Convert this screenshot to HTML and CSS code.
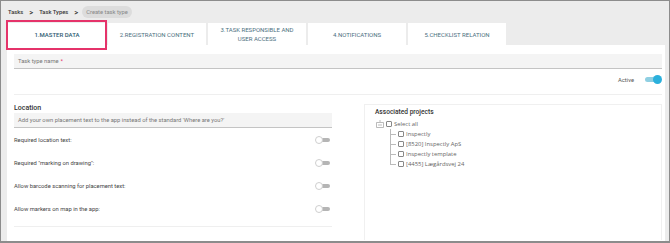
FILE: index.html
```html
<!DOCTYPE html>
<html>
<head>
<meta charset="utf-8">
<link rel="stylesheet" href="styles.css">
</head>
<body>
<div class="frame">
  <div class="crumbs">
    <span class="crumb">Tasks</span>
    <span class="sep">&gt;</span>
    <span class="crumb">Task Types</span>
    <span class="sep">&gt;</span>
    <span class="pill">Create task type</span>
  </div>
  <div class="tabs">
    <div class="tab active">1.MASTER DATA</div>
    <div class="tab">2.REGISTRATION CONTENT</div>
    <div class="tab two">3.TASK RESPONSIBLE AND USER ACCESS</div>
    <div class="tab">4.NOTIFICATIONS</div>
    <div class="tab">5.CHECKLIST RELATION</div>
  </div>
  <div class="panel">
    <div class="field wide">Task type name <span class="req">*</span></div>
    <div class="active-row">
      <span class="active-label">Active</span>
      <span class="toggle on"><span class="track"></span><span class="knob"></span></span>
    </div>
    <div class="cols">
      <div class="left">
        <div class="heading">Location</div>
        <div class="field">Add your own placement text to the app instead of the standard 'Where are you?'</div>
        <div class="opt"><span>Required location text:</span><span class="toggle"><span class="track"></span><span class="knob"></span></span></div>
        <div class="opt"><span>Required "marking on drawing":</span><span class="toggle"><span class="track"></span><span class="knob"></span></span></div>
        <div class="opt"><span>Allow barcode scanning for placement text:</span><span class="toggle"><span class="track"></span><span class="knob"></span></span></div>
        <div class="opt"><span>Allow markers on map in the app:</span><span class="toggle"><span class="track"></span><span class="knob"></span></span></div>
        <div class="rule"></div>
      </div>
      <div class="right">
        <div class="heading">Associated projects</div>
        <div class="tree">
          <div class="node root">
            <svg class="exp" width="8" height="9" viewBox="0 0 8 9"><path d="M4 0V2M0.5 2.5H7.5V7.5H0.5Z M2 5H6" fill="none" stroke="#aaa" stroke-width="0.8"/></svg>
            <span class="cb"></span><span>Select all</span>
          </div>
          <div class="children">
            <div class="node"><span class="branch"></span><span class="cb"></span><span>Inspectly</span></div>
            <div class="node"><span class="branch"></span><span class="cb"></span><span>[8520] Inspectly ApS</span></div>
            <div class="node"><span class="branch"></span><span class="cb"></span><span>Inspectly template</span></div>
            <div class="node last"><span class="branch"></span><span class="cb"></span><span>[4455] Lægårdsvej 24</span></div>
          </div>
        </div>
      </div>
    </div>
  </div>
</div>
</body>
</html>
```
FILE: styles.css
```css
* { box-sizing: border-box; }
html, body { margin: 0; padding: 0; }
body {
  width: 670px;
  height: 243px;
  overflow: hidden;
  font-family: Roboto, "Liberation Sans", sans-serif;
  background: #fff;
}
.frame {
  width: 670px;
  height: 243px;
  border: 1px solid #8c8c8c;
  border-bottom-width: 2px;
  background: #ececec;
  padding: 0 4px 0 6px;
  display: flex;
  flex-direction: column;
}
.crumbs {
  height: 22px;
  display: flex;
  align-items: center;
  gap: 5px;
  padding-left: 1px;
  padding-top: 0;
  font-size: 5.8px;
  font-weight: 500;
  color: #333;
}
.sep { font-size: 7.5px; color: #333; margin: 0 1px; }
.pill {
  background: #dcdcdc;
  color: #888;
  font-weight: 400;
  border-radius: 8px;
  padding: 3px 4px;
  margin-left: -2px;
}
.tabs {
  display: flex;
  gap: 2px;
  padding-left: 1px;
  height: 22px;
}
.tab {
  width: 98px;
  background: #fff;
  color: #4b6f80;
  font-size: 6px;
  text-align: center;
  display: flex;
  align-items: center;
  justify-content: center;
  line-height: 9px;
  position: relative;
}
.tab.two { padding: 0 5px; }
.tab.active { color: #2f5c72; font-weight: 500; }
.tab.active::after {
  content: "";
  position: absolute;
  left: -2px;
  right: -1px;
  top: -3px;
  bottom: -5px;
  border: 2px solid #e5336a;
}
.panel {
  flex: 1;
  background: #fff;
  padding: 9px 3px 0 7px;
}
.field {
  height: 15px;
  background: #f4f4f4;
  border-bottom: 1px solid #c4c4c4;
  font-size: 5.8px;
  color: #777;
  display: flex;
  align-items: center;
  padding-left: 4px;
}
.req { color: #e5336a; margin-left: 2px; }
.active-row {
  height: 26px;
  display: flex;
  align-items: center;
  justify-content: flex-end;
  gap: 11px;
  border-bottom: 1px solid #efefef;
  padding-bottom: 4px;
}
.active-label { font-size: 5.8px; color: #555; }
.toggle {
  position: relative;
  width: 17px;
  height: 8px;
  display: inline-block;
}
.toggle .track {
  position: absolute;
  right: 0;
  top: 2px;
  width: 10px;
  height: 4px;
  border-radius: 2px;
  background: #b5b5b5;
}
.toggle .knob {
  position: absolute;
  left: 2px;
  top: 0;
  width: 8px;
  height: 8px;
  border-radius: 50%;
  background: #fff;
  border: 1px solid #cfcfcf;
}
.toggle.on .track { left: 0; right: auto; width: 14px; top: 1.5px; height: 5px; background: #8fcfe2; border-radius: 3px; }
.toggle.on .knob { left: auto; right: 0; top: -0.5px; width: 9px; height: 9px; border: 0; background: #2bb0dc; }
.cols {
  display: flex;
  gap: 32px;
  padding-top: 9px;
}
.left { width: 318px; }
.right {
  flex: 1;
  border: 1px solid #f0f0f0;
  border-bottom: 0;
  height: 136px;
  padding: 3px 10px;
}
.heading {
  font-size: 7px;
  font-weight: 500;
  color: #333;
  height: 9px;
  line-height: 9px;
}
.right .heading { font-size: 6.6px; }
.opt {
  height: 23px;
  display: flex;
  align-items: center;
  justify-content: space-between;
  padding-right: 2px;
  font-size: 5.8px;
  color: #444;
}
.rule { border-top: 1px solid #efefef; margin-top: 6px; }
.tree {
  font-family: "Open Sans", "Liberation Sans", sans-serif;
  font-size: 5.9px;
  color: #666;
  padding-top: 2px;
}
.node {
  display: flex;
  align-items: center;
  height: 10px;
  position: relative;
}
.exp { margin-left: 1px; margin-right: 2px; }
.cb {
  width: 6px;
  height: 6px;
  border: 0.8px solid #888;
  border-radius: 1px;
  margin-right: 2px;
  background: #fff;
  flex: none;
}
.children { padding-left: 15px; }
.branch {
  width: 8px;
  height: 10px;
  position: relative;
  flex: none;
}
.branch::before {
  content: "";
  position: absolute;
  left: 0;
  top: 0;
  bottom: 0;
  border-left: 0.8px solid #bbb;
}
.node.last .branch::before { bottom: 5px; }
.branch::after {
  content: "";
  position: absolute;
  left: 0;
  top: 5px;
  width: 6px;
  border-top: 0.8px solid #bbb;
}
```
